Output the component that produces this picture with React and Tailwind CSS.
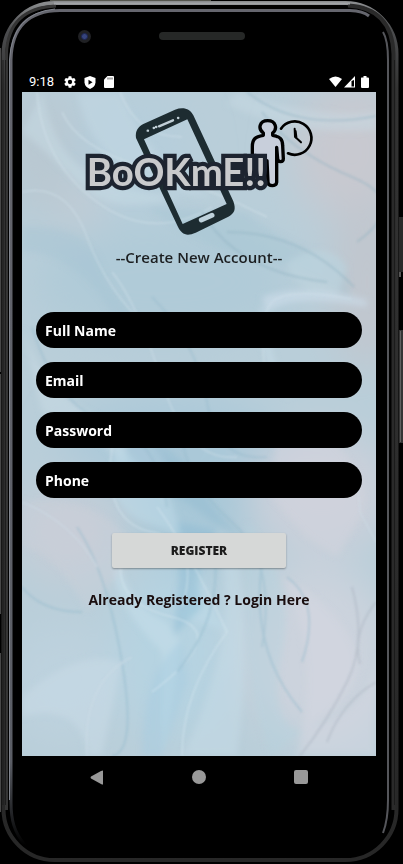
import React from "react";

const fields = [
  { id: "name", label: "Full Name", type: "text" },
  { id: "email", label: "Email", type: "email" },
  { id: "password", label: "Password", type: "password" },
  { id: "phone", label: "Phone", type: "tel" },
];

function PhoneBody() {
  return (
    <svg
      aria-hidden="true"
      className="absolute inset-0 h-full w-full"
      viewBox="0 0 403 864"
      preserveAspectRatio="none"
      fill="none"
    >
      <defs>
        <linearGradient id="rim" x1="0" y1="0" x2="0" y2="1">
          <stop offset="0" stopColor="#8a8c8e" />
          <stop offset="0.03" stopColor="#4c4d4f" />
          <stop offset="0.1" stopColor="#333" />
          <stop offset="1" stopColor="#272727" />
        </linearGradient>
        <linearGradient id="innerRim" x1="0" y1="0" x2="0" y2="1">
          <stop offset="0" stopColor="#65666e" />
          <stop offset="0.9" stopColor="#5b5e66" />
          <stop offset="1" stopColor="#5b5e66" stopOpacity="0" />
        </linearGradient>
      </defs>
      <rect width="403" height="864" fill="#000" />
      <path d="M0.5 48V372M0.5 374V614M0.5 653V812" stroke="#484848" />
      <path d="M50 0.5H211" stroke="#55564f" />
      <rect x="399" y="217" width="4" height="55" fill="#292929" />
      <path d="M399 272h2v5h-2z" fill="#555" />
      <rect x="399" y="330" width="4" height="113" fill="#343434" />
      <path d="M400.500 331V442" stroke="#606060" />
      <rect x="3.500" y="3" width="393" height="857" rx="51" fill="#000" stroke="url(#rim)" strokeWidth="4" />
      <path d="M6.500 810V54Q8 8 56 6" stroke="#353535" strokeWidth="3" />
      <path d="M3 805V60M5.500 805V60" stroke="#1d1d1d" />
      <path d="M348 5.500Q392 8 393.500 54V810" stroke="#2a2a2a" strokeWidth="4" />
      <path d="M394.500 60V805" stroke="#1b1b1b" />
      <path d="M54 3.500H350" stroke="#a1a4a7" strokeWidth="2" />
      <path d="M25 845C14 832 11 820 11 802V60Q12 11 60 10.500H350Q363 11 369 16" stroke="url(#innerRim)" strokeWidth="3" />
      <path d="M9.500 800V60Q12 13 55 9" stroke="#81858e" />
      <path d="M383 32Q388 40 388 60V800Q388 820 383 833" stroke="#55565b" strokeWidth="2" />
    </svg>
  );
}

function FabricBackground() {
  return (
    <svg
      aria-hidden="true"
      className="absolute inset-0 h-full w-full"
      viewBox="0 0 354 664"
      preserveAspectRatio="none"
      fill="none"
    >
      <defs>
        <filter id="wide" x="-50%" y="-50%" width="200%" height="200%">
          <feGaussianBlur stdDeviation="20" />
        </filter>
        <filter id="fold" x="-20%" y="-20%" width="140%" height="140%">
          <feGaussianBlur stdDeviation="3" />
        </filter>
        <filter id="crease" x="-20%" y="-20%" width="140%" height="140%">
          <feGaussianBlur stdDeviation="1.200" />
        </filter>
      </defs>
      <rect width="354" height="664" fill="#b9ced9" />
      <g filter="url(#wide)">
        <ellipse cx="330" cy="60" rx="60" ry="70" fill="#c8c9d0" />
        <ellipse cx="345" cy="190" rx="35" ry="90" fill="#c1c6ce" />
        <ellipse cx="20" cy="60" rx="40" ry="60" fill="#b9c8d1" />
        <ellipse cx="110" cy="60" rx="60" ry="60" fill="#b6cedb" />
        <ellipse cx="140" cy="190" rx="130" ry="60" fill="#b0cbd8" />
        <ellipse cx="150" cy="350" rx="110" ry="50" fill="#acc9d9" />
        <ellipse cx="170" cy="420" rx="55" ry="60" fill="#a8c8d8" />
        <ellipse cx="300" cy="400" rx="70" ry="60" fill="#ccd0da" />
        <ellipse cx="45" cy="440" rx="55" ry="50" fill="#c5cdd7" />
        <ellipse cx="150" cy="560" rx="60" ry="90" fill="#b6d3e1" />
        <ellipse cx="295" cy="560" rx="75" ry="90" fill="#ccd3dd" />
        <ellipse cx="40" cy="590" rx="60" ry="60" fill="#bdd2de" />
        <ellipse cx="60" cy="115" rx="14" ry="20" fill="#c9cbd2" />
      </g>
      <g filter="url(#fold)">
        <path d="M20 0Q35 70 78 86T160 105Q90 125 60 95T0 40Z" fill="#c8dbe5" opacity="0.500" />
        <path d="M55 0Q65 55 110 80T190 105Q130 75 98 0Z" fill="#c1d7e2" opacity="0.600" />
        <path d="M215 0Q285 25 354 20V38Q270 45 205 12Z" fill="#c8d9e4" opacity="0.500" />
        <path d="M0 135Q65 130 80 175T140 240L95 230Q55 160 0 160Z" fill="#9fc1d0" opacity="0.300" />
        <path d="M125 115Q185 160 230 165T330 210L322 170Q255 150 225 120Z" fill="#9fc2d1" opacity="0.300" />
        <path d="M265 170Q305 145 325 175L315 205Q270 200 265 170Z" fill="#bed5df" opacity="0.600" />
        <path d="M245 222Q265 200 345 215V208Q280 190 240 205Z" fill="#cbdce8" opacity="0.700" />
        <path d="M245 220Q245 275 275 300L265 305Q235 265 238 215Z" fill="#c5dae6" opacity="0.700" />
        <path d="M0 235Q25 310 90 330T145 410Q75 340 20 320Z" fill="#c9dce5" opacity="0.500" />
        <path d="M105 350Q150 345 175 390T240 455L190 430Q145 390 100 390Z" fill="#8bb7cf" opacity="0.350" />
        <path d="M95 350Q75 420 135 435T160 525L205 540Q165 465 150 410Z" fill="#bfdbea" opacity="0.500" />
        <path d="M155 430Q160 480 151 545L180 515Q170 470 195 438Z" fill="#87b9d2" opacity="0.400" />
        <path d="M140 664Q155 590 158 550L145 530Q105 515 95 460Q80 500 140 560Z" fill="#c5dde9" opacity="0.600" />
        <path d="M120 664Q120 580 160 548L165 590 140 664Z" fill="#a6cce0" opacity="0.450" />
        <path d="M195 440Q210 515 195 570T160 664H215Q230 560 215 450Z" fill="#c6dce8" opacity="0.500" />
        <path d="M225 430Q275 490 260 560T280 640L250 664Q215 590 225 430Z" fill="#b4d1df" opacity="0.400" />
        <path d="M255 330Q300 330 325 365T338 425L315 465 285 445 250 405Z" fill="#d2d4de" opacity="0.500" />
        <path d="M0 410Q80 400 115 460L65 520Q35 460 0 455Z" fill="#d1d2da" opacity="0.300" />
        <path d="M0 605Q55 555 100 570L80 664H65Q60 610 0 625Z" fill="#c9dce7" opacity="0.500" />
        <path d="M260 485Q310 510 330 550T290 635Q350 620 354 560V664H275Q300 560 260 485Z" fill="#d5d8e2" opacity="0.500" />
      </g>
      <g filter="url(#crease)" strokeWidth="2" opacity="0.400">
        <path d="M15 0Q20 70 75 110T190 115M40 20Q55 55 120 75T245 125M98 0Q115 45 160 45" stroke="#d5e4ec" />
        <path d="M225 0Q275 40 354 24M240 20Q270 60 330 85T335 150M180 120Q215 180 305 190M205 140Q280 140 332 195" stroke="#8fb1c1" />
        <path d="M0 100Q45 90 65 145T130 240M90 180Q115 210 140 290T215 365M245 300Q235 225 250 210T330 207" stroke="#d1e2eb" />
        <path d="M130 205Q175 250 185 310T245 365M10 235Q35 315 85 330T145 415M160 345Q165 390 210 430T240 555" stroke="#94b9cb" />
        <path d="M90 355Q80 430 130 440T160 515M100 465Q90 510 150 525T130 600M135 415Q165 455 205 540Q160 600 160 664" stroke="#d8e9f1" />
        <path d="M190 445Q205 520 155 580M245 445Q220 550 280 620M55 435Q85 480 100 570T90 664M0 495Q20 520 60 520M265 485Q300 510 280 570" stroke="#8eb7ca" />
        <path d="M330 495Q345 550 325 590T278 664M354 510Q330 540 338 572M354 590Q320 610 305 650" stroke="#a5afbc" />
        <path d="M305 380Q335 360 338 420L354 450M0 410Q50 430 75 475M65 664Q60 590 110 565" stroke="#cfdde7" />
      </g>
    </svg>
  );
}

function Logo() {
  return (
    <svg
      role="img"
      aria-label="BoOKmE!!"
      className="h-[140px] w-[250px] shrink-0"
      viewBox="0 0 750 420"
      fill="none"
    >
      <path
        fill="#1d2c31"
        fillRule="evenodd"
        d="M186 120C183 98 193 86 208 78L303 35C328 26 348 32 358 52L478 310C487 335 481 347 463 356L365 404C338 416 323 410 311 385ZM210 124L326 378 458 318 340 64Z"
      />
      <path d="M255 85L297 67M221 98h1M239 90h1M246 87h1M312 60h1" stroke="#c0ced6" strokeWidth="7" strokeLinecap="round" />
      <path d="M382 366L414 352" stroke="#bfd2dc" strokeWidth="15" strokeLinecap="round" />
      <g transform="translate(5 -2)" stroke="#000" strokeWidth="10" strokeLinecap="round" strokeLinejoin="round">
        <path
          fill="#c8cfdb"
          d="M530 190V148C530 126 538 118 563 114V107C546 94 551 70 576 70C601 70 606 94 591 107V114C614 118 621 126 621 145L623 184C623 195 607 196 606 185L603 150V255C602 268 578 268 577 255L574 190"
        />
        <path d="M616 94A50 50 0 1 1 637 168" strokeWidth="8" />
        <path d="M657 94L658 118 676 135" strokeWidth="6" />
        <path d="M659 102L661 119" strokeWidth="8" />
      </g>
      <text
        x="38"
        y="264"
        fontSize="115"
        fill="#c9cacc"
        stroke="#1d2430"
        strokeWidth="25"
        strokeLinejoin="miter"
        strokeMiterlimit="2"
        paintOrder="stroke"
        className="font-['Lato',sans-serif] font-bold"
      >
        BoOKmE!!
      </text>
    </svg>
  );
}

function StatusBar() {
  return (
    <div className="flex h-5 items-center justify-between pr-[34px] pl-[29px] text-white">
      <div className="flex items-center gap-2">
        <time className="mr-0.5 font-['Roboto',sans-serif] text-[13px] leading-5">9:18</time>
        <svg aria-hidden="true" className="size-3" viewBox="2 2 20 20" fill="currentColor">
          <path d="M19.140 12.940c.04-.3.06-.61.06-.94s-.02-.64-.07-.94l2.030-1.580a.49.49 0 0 0 .12-.61l-1.920-3.320a.49.49 0 0 0-.59-.22l-2.390.96a7 7 0 0 0-1.620-.94l-.36-2.540A.48.48 0 0 0 13.920 2.400h-3.840a.48.48 0 0 0-.47.41l-.36 2.540c-.59.24-1.130.57-1.620.94l-2.390-.96a.48.48 0 0 0-.59.22L2.740 8.870a.48.48 0 0 0 .12.61l2.030 1.580a7 7 0 0 0 0 1.880l-2.030 1.580a.49.49 0 0 0-.12.61l1.920 3.320c.12.22.37.29.59.22l2.390-.96c.5.38 1.030.7 1.620.94l.36 2.540c.05.24.24.41.48.41h3.840c.24 0 .44-.17.47-.41l.36-2.540a7 7 0 0 0 1.620-.94l2.390.96c.22.08.47 0 .59-.22l1.920-3.320a.48.48 0 0 0-.12-.61zM12 15.600a3.600 3.600 0 1 1 0-7.200 3.600 3.600 0 0 1 0 7.200z" />
        </svg>
        <svg aria-hidden="true" className="h-[13px] w-3" viewBox="0 0 12 13">
          <path fill="currentColor" d="M6 0l5.500 2v4.500Q11 11 6 13 1 11 .5 6.500V2z" />
          <path fill="#000" d="M4.500 3.800v5L8.500 6.300z" />
        </svg>
        <svg aria-hidden="true" className="h-3 w-[10px]" viewBox="0 0 10 12">
          <path fill="currentColor" d="M3.500 0H9q1 0 1 1v10q0 1-1 1H1q-1 0-1-1V3.500z" />
          <path stroke="#000" strokeWidth="0.700" d="M4 1.500v2M6 1.500v2M8 1.500v2" />
        </svg>
      </div>
      <svg aria-hidden="true" className="h-3 w-10" viewBox="0 0 40 12" fill="currentColor">
        <path d="M0 3Q6.500-2 13 3L6.500 11z" />
        <path fillRule="evenodd" d="M15 11.500L26 0v11.500zM22.500 5v5.500H25V4z" />
        <path d="M32.500 1.500h2V0h3v1.500h1.500q1 0 1 1V11q0 1-1 1h-6q-1 0-1-1V2.500q0-1 .5-1z" />
      </svg>
    </div>
  );
}

export default function App() {
  return (
    <div className="relative flex min-h-screen flex-col overflow-hidden bg-black font-['Open_Sans','Noto_Sans',sans-serif]">
      <PhoneBody />
      <header className="relative">
        <div className="grid h-[72px] grid-cols-[1fr_86px_1fr] items-center">
          <span className="ml-[78px] flex size-[13px] items-center justify-center rounded-full bg-[#202124]">
            <span className="size-[7px] rounded-full border border-[#1c2553] bg-[#36447c]" />
          </span>
          <span className="h-2 rounded-full bg-[#262827]" />
        </div>
        <StatusBar />
      </header>

      <main className="relative mr-[27px] ml-[22px] flex-1 overflow-hidden">
        <FabricBackground />
        <div className="relative flex flex-col items-center pt-[6px]">
          <Logo />
          <h1 className="mt-[9px] text-[15px] leading-5 font-semibold whitespace-nowrap text-[#1c1f21]">
            --Create New Account--
          </h1>
          <form
            className="mt-[45px] flex w-full flex-col items-center px-[14px]"
            onSubmit={(event) => event.preventDefault()}
          >
            <div className="flex w-full flex-col gap-[14px]">
              {fields.map((field) => (
                <input
                  key={field.id}
                  id={field.id}
                  name={field.id}
                  type={field.type}
                  aria-label={field.label}
                  placeholder={field.label}
                  className="h-9 w-full rounded-full bg-black px-[9px] text-sm font-bold text-white placeholder:text-white placeholder:opacity-100"
                />
              ))}
            </div>
            <button
              type="submit"
              className="mt-[35px] h-[35px] w-[174px] rounded-xs bg-[#d6d8d7] text-xs font-extrabold text-[#1c1c1c] shadow-[0_1px_2px_rgba(0,0,0,0.35)]"
            >
              REGISTER
            </button>
          </form>
          <a href="#login" className="mt-[22px] text-sm leading-5 font-bold whitespace-nowrap text-[#190d0e]">
            Already Registered ? Login Here
          </a>
        </div>
      </main>

      <nav aria-label="System" className="relative flex h-[108px] items-start justify-center gap-[86px] pt-[13px] pr-[6px]">
        <button type="button" aria-label="Back" className="flex size-4 items-center justify-center">
          <svg className="h-[15px] w-[13px]" viewBox="0 0 13 15" fill="#999">
            <path d="M13 .5v14Q12 14.500 11 14L1 8.500Q0 7.500 1 6.500L11 1z" />
          </svg>
        </button>
        <button type="button" aria-label="Home" className="flex size-4 items-center justify-center">
          <span className="size-[14px] rounded-full bg-[#999]" />
        </button>
        <button type="button" aria-label="Recent apps" className="flex size-4 items-center justify-center">
          <span className="size-[14px] rounded-xs bg-[#999]" />
        </button>
      </nav>
    </div>
  );
}
